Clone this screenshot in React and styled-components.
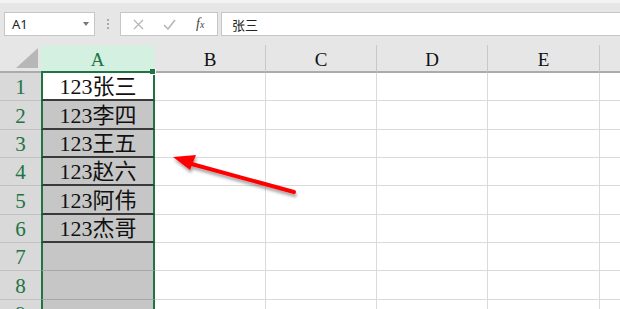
import React from 'react';
import styled, { createGlobalStyle } from 'styled-components';

const GlobalStyle = createGlobalStyle`
  html, body {
    margin: 0;
    padding: 0;
    background: #ffffff;
    overflow: hidden;
  }
`;

const Page = styled.div`
  position: relative;
  width: 620px;
  height: 309px;
  overflow: hidden;
  background: #ffffff;
`;

const Toolbar = styled.div`
  display: flex;
  align-items: center;
  height: 42px;
  padding: 0 0 0 4px;
  background: #e6e6e6;
  border-top: 3px solid #f3f3f3;
  box-sizing: content-box;
  font-family: 'Noto Sans', 'Noto Sans CJK SC', sans-serif;
  font-size: 13px;
  color: #222;
`;

const NameBox = styled.div`
  display: flex;
  align-items: center;
  justify-content: space-between;
  width: 91px;
  height: 24px;
  box-sizing: border-box;
  padding: 0 5px 0 7px;
  background: #fff;
  border: 1px solid #c6c6c6;
`;

const Caret = styled.span`
  width: 0;
  height: 0;
  border-left: 3px solid transparent;
  border-right: 3px solid transparent;
  border-top: 4px solid #777;
`;

const Grip = styled.div`
  display: flex;
  flex-direction: column;
  gap: 2px;
  margin: 0 11px 0 12px;

  span {
    width: 2px;
    height: 2px;
    background: #aaa;
  }
`;

const FxButtons = styled.div`
  display: flex;
  align-items: center;
  width: 98px;
  height: 24px;
  box-sizing: border-box;
  background: #fff;
  border: 1px solid #c6c6c6;
  padding-left: 12px;
  gap: 14px;
  color: #b4b4b4;
`;

const FxLabel = styled.span`
  font-family: 'Liberation Serif', serif;
  font-style: italic;
  font-size: 14px;
  color: #444;
  margin-left: 6px;

  sub {
    font-size: 10px;
    vertical-align: baseline;
  }
`;

const FormulaInput = styled.div`
  display: flex;
  align-items: center;
  flex: 1;
  height: 24px;
  box-sizing: border-box;
  margin-left: 3px;
  padding-left: 10px;
  background: #fff;
  border: 1px solid #c6c6c6;
  border-right: none;
`;

const Sheet = styled.div`
  display: grid;
  grid-template-columns: 41px 114px 111px 111px 111px 112px 111px;
  grid-template-rows: 28px;
  grid-auto-rows: 28.33px;
  font-family: 'Liberation Serif', 'Noto Sans CJK SC', serif;
`;

const Corner = styled.div`
  position: relative;
  background: #e6e6e6;
  border-bottom: 2px solid #ababab;
  box-sizing: border-box;

  &::after {
    content: '';
    position: absolute;
    right: 3px;
    bottom: 3px;
    border-left: 22px solid transparent;
    border-bottom: 20px solid #b7b7b7;
  }
`;

const ColHead = styled.div`
  position: relative;
  display: flex;
  align-items: flex-end;
  justify-content: center;
  padding-bottom: 2px;
  box-sizing: border-box;
  font-size: 19px;
  line-height: 1;
  background: ${p => (p.$active ? '#d3f0e0' : '#e6e6e6')};
  color: ${p => (p.$active ? '#217346' : '#111')};
  border-bottom: 2px solid ${p => (p.$active ? '#217346' : '#ababab')};
  border-right: 1px solid ${p => (p.$active ? '#e6e6e6' : '#c8c8c8')};
`;

const FillHandle = styled.span`
  position: absolute;
  right: -2px;
  bottom: -4px;
  width: 5px;
  height: 5px;
  background: #217346;
  border: 1px solid #fff;
  border-top: none;
  border-left: none;
  z-index: 2;
`;

const RowHead = styled.div`
  display: flex;
  align-items: flex-end;
  justify-content: center;
  padding-bottom: 2px;
  box-sizing: border-box;
  font-size: 21px;
  line-height: 1;
  color: #217346;
  background: #d9d9d9;
  border-bottom: 1px solid #c2c2c2;
`;

const Cell = styled.div`
  display: flex;
  align-items: flex-end;
  justify-content: center;
  padding-bottom: 1px;
  box-sizing: border-box;
  font-size: 22px;
  line-height: 1;
  color: #111;
  white-space: nowrap;
  background: ${p => (p.$active ? '#ffffff' : p.$sel ? '#c6c6c6' : '#ffffff')};
  border-right: ${p => (p.$sel ? '2px solid #217346' : '1px solid #dadada')};
  border-left: ${p => (p.$sel ? '2px solid #217346' : 'none')};
  border-bottom: ${p =>
    p.$dark ? '2px solid #3a3a3a' : p.$sel ? '1px solid #a8a8a8' : '1px solid #dadada'};
`;

const Arrow = styled.svg`
  position: absolute;
  left: 160px;
  top: 145px;
  overflow: visible;
`;

const columns = ['A', 'B', 'C', 'D', 'E', 'F'];
const names = ['123张三', '123李四', '123王五', '123赵六', '123阿伟', '123杰哥', '', '', ''];

const App = () => {
  return (
    <>
      <GlobalStyle />
      <Page>
        <Toolbar>
          <NameBox>
            <span>A1</span>
            <Caret />
          </NameBox>
          <Grip>
            <span />
            <span />
            <span />
          </Grip>
          <FxButtons>
            <svg width="11" height="11" viewBox="0 0 11 11">
              <path d="M1 1L10 10M10 1L1 10" stroke="#b4b4b4" strokeWidth="1.2" fill="none" />
            </svg>
            <svg width="13" height="11" viewBox="0 0 13 11" style={{ marginLeft: 5 }}>
              <path d="M1 6L5 10L12 1" stroke="#b4b4b4" strokeWidth="1.5" fill="none" />
            </svg>
            <FxLabel>
              f<sub>x</sub>
            </FxLabel>
          </FxButtons>
          <FormulaInput>张三</FormulaInput>
        </Toolbar>

        <Sheet>
          <Corner />
          {columns.map((c, i) => (
            <ColHead key={c} $active={i === 0}>
              {c}
              {i === 0 && <FillHandle />}
            </ColHead>
          ))}
          {names.map((n, r) => (
            <React.Fragment key={r}>
              <RowHead>{r + 1}</RowHead>
              <Cell $sel $active={r === 0} $dark={r < 6}>
                {n}
              </Cell>
              {columns.slice(1).map(c => (
                <Cell key={c} />
              ))}
            </React.Fragment>
          ))}
        </Sheet>

        <Arrow width="140" height="55" viewBox="0 0 140 55">
          <defs>
            <filter id="sh" x="-20%" y="-50%" width="140%" height="200%">
              <feDropShadow dx="1" dy="3" stdDeviation="1.5" floodColor="#000" floodOpacity="0.35" />
            </filter>
          </defs>
          <g filter="url(#sh)">
            <path d="M134 47L28 18" stroke="#ff0000" strokeWidth="4" strokeLinecap="round" fill="none" />
            <path d="M13 12L36 10L30 25Z" fill="#ff0000" />
          </g>
        </Arrow>
      </Page>
    </>
  );
};

export default App;
